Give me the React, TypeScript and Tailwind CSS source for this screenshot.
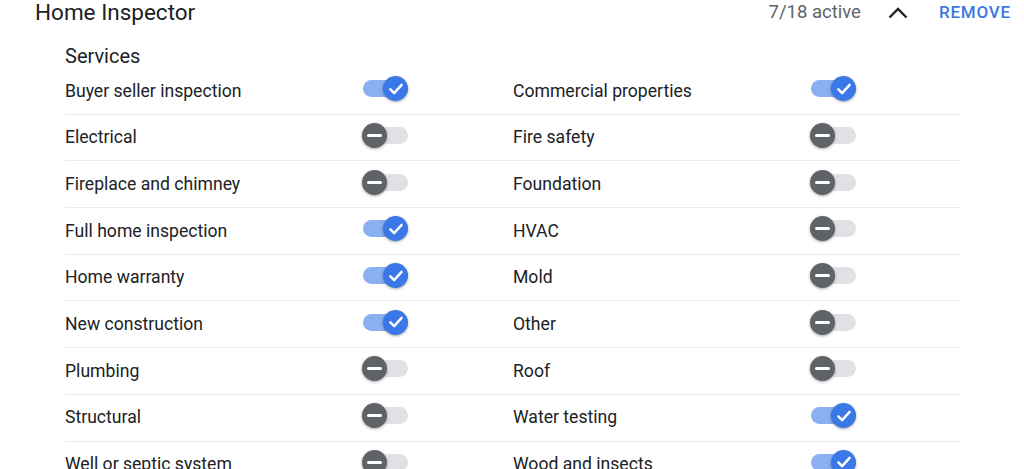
import React from 'react';

type Item = { label: string; on: boolean };

const rows: [Item, Item][] = [
  [{ label: 'Buyer seller inspection', on: true }, { label: 'Commercial properties', on: true }],
  [{ label: 'Electrical', on: false }, { label: 'Fire safety', on: false }],
  [{ label: 'Fireplace and chimney', on: false }, { label: 'Foundation', on: false }],
  [{ label: 'Full home inspection', on: true }, { label: 'HVAC', on: false }],
  [{ label: 'Home warranty', on: true }, { label: 'Mold', on: false }],
  [{ label: 'New construction', on: true }, { label: 'Other', on: false }],
  [{ label: 'Plumbing', on: false }, { label: 'Roof', on: false }],
  [{ label: 'Structural', on: false }, { label: 'Water testing', on: true }],
  [{ label: 'Well or septic system', on: false }, { label: 'Wood and insects', on: true }],
];

const Toggle = ({ on }: { on: boolean }) => (
  <div className="relative w-[46px] h-[25px] -mt-[4px]">
    <div
      className={`absolute left-[1px] right-0 top-[4px] h-[17px] rounded-full ${on ? 'bg-[#8ab0f2]' : 'bg-[#dfe1e5]'}`}
    ></div>
    <div
      className={`absolute top-0 w-[25px] h-[25px] rounded-full flex items-center justify-center shadow-[0_1px_3px_rgba(0,0,0,0.35)] ${on ? 'right-0 bg-[#3b78e7]' : 'left-0 bg-[#5f6368]'}`}
    >
      {on ? (
        <svg width="18" height="18" viewBox="0 0 24 24" fill="none">
          <path d="M4.5 12.5l5 5L19.5 6.5" stroke="white" strokeWidth="3.2" strokeLinecap="round" strokeLinejoin="round" />
        </svg>
      ) : (
        <div className="w-[15px] h-[3px] bg-white rounded-full"></div>
      )}
    </div>
  </div>
);

const Cell = ({ item }: { item: Item }) => (
  <div className="flex items-center w-[448px]">
    <span className="w-[297px] text-[17.6px] text-[#202124]">{item.label}</span>
    <Toggle on={item.on} />
  </div>
);

export default function App() {
  return (
    <div className="w-[1024px] h-[469px] overflow-hidden bg-white font-['Roboto',sans-serif]">
      {/* Header */}
      <div className="flex items-center h-[26px] pl-[35px] pr-[13px]">
        <span className="text-[22.5px] text-[#202124] flex-1">Home Inspector</span>
        <span className="text-[18.5px] text-[#5f6368]">7/18 active</span>
        <svg className="ml-[27px]" width="20" height="12" viewBox="0 0 20 12" fill="none">
          <path d="M1.5 10.5L10 2l8.5 8.5" stroke="#202124" strokeWidth="2.4" />
        </svg>
        <span className="ml-[31px] text-[17px] font-medium tracking-[0.8px] text-[#3c78e0]">REMOVE</span>
      </div>

      <div className="pl-[65px]">
        <div className="mt-[18px] h-[24px] leading-[24px] text-[20px] text-[#202124]">Services</div>
        <div className="w-[896px]">
          {rows.map((r, i) => (
            <div key={i} className="flex items-center h-[46.7px] border-b border-[#ebebeb]">
              <Cell item={r[0]} />
              <Cell item={r[1]} />
            </div>
          ))}
        </div>
      </div>
    </div>
  );
}
